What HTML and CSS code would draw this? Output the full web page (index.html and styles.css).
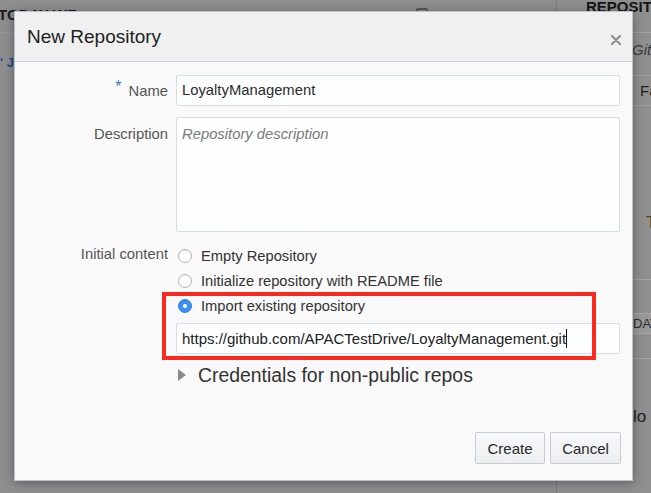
FILE: index.html
```html
<!DOCTYPE html>
<html>
<head>
<meta charset="utf-8">
<link rel="stylesheet" href="styles.css">
</head>
<body>
<div class="page">
  <div class="main">
    <div class="main-head"><span class="main-title">TODAY WE</span><span class="main-icon"></span></div>
    <div class="main-link">' Jo</div>
  </div>
  <div class="side">
    <div class="side-head">REPOSITORIES</div>
    <div class="side-search">Git</div>
    <div class="side-filter">Fa</div>
    <div class="side-item">T</div>
    <div class="side-tagrow"><div class="side-tag">DAV</div></div>
    <div class="side-text">lo c</div>
  </div>
</div>

<div class="dialog">
  <div class="dialog-head">
    <h1 class="dialog-title">New Repository</h1>
    <span class="close"><svg width="10" height="10" viewBox="0 0 10 10"><path d="M1 1L9 9M9 1L1 9" stroke="#8c8c8c" stroke-width="2" stroke-linecap="round"/></svg></span>
  </div>
  <div class="dialog-body">
    <div class="form">
      <div class="label label-mid"><span class="req">*</span>Name</div>
      <div class="field">LoyaltyManagement</div>
      <div class="label label-top">Description</div>
      <div class="field textarea"><span class="placeholder">Repository description</span></div>
      <div class="label label-radio">Initial content</div>
      <div class="options">
        <div class="radio-row"><span class="radio"></span>Empty Repository</div>
        <div class="radio-row"><span class="radio"></span>Initialize repository with README file</div>
        <div class="radio-row"><span class="radio checked"></span>Import existing repository</div>
        <div class="field url">https://github.com/APACTestDrive/LoyaltyManagement.git<span class="caret"></span></div>
        <div class="cred"><span class="tri"></span>Credentials for non-public repos</div>
      </div>
    </div>
  </div>
  <div class="dialog-foot">
    <button class="btn">Create</button>
    <button class="btn">Cancel</button>
  </div>
  <div class="highlight"></div>
</div>
</body>
</html>
```

FILE: styles.css
```css
* { box-sizing: border-box; }
html, body { margin: 0; padding: 0; }
body {
  width: 651px;
  height: 493px;
  overflow: hidden;
  background: #8f8f8f;
  font-family: "Liberation Sans", Arial, sans-serif;
  position: relative;
}

/* background page (dimmed) */
.page {
  display: grid;
  grid-template-columns: 556px 1fr;
  height: 493px;
}
.main { background: #8e8e8e; }
.main-head {
  display: flex;
  justify-content: space-between;
  height: 33px;
  padding: 7px 128px 0 0;
  border-bottom: 1px solid #969696;
}
.main-title {
  font-weight: bold;
  font-size: 15px;
  line-height: 16px;
  color: #1c1c1c;
  margin-left: -2px;
}
.main-icon {
  width: 12px;
  height: 12px;
  border: 2px solid #555;
  border-radius: 2px;
  margin-top: 1px;
}
.main-link {
  padding: 22px 0 0 0;
  font-size: 13px;
  font-weight: bold;
  line-height: 16px;
  color: #1f4a86;
}
.side {
  border-left: 1px solid #7c7c7c;
  background: #8f8f8f;
  color: #1e1e1e;
}
.side-head {
  height: 33px;
  padding: 1px 0 0 29px;
  font-weight: bold;
  font-size: 15px;
  line-height: 12px;
  color: #151515;
  border-bottom: 1px solid #a2a2a2;
  white-space: nowrap;
  overflow: hidden;
}
.side-search {
  height: 42px;
  padding: 8px 0 0 75px;
  font-style: italic;
  font-size: 15px;
  line-height: 17px;
  color: #3a3a3a;
}
.side-filter {
  height: 31px;
  padding-left: 83px;
  border-top: 1px solid #a0a0a0;
  border-bottom: 1px solid #a0a0a0;
  font-size: 15px;
  line-height: 29px;
  color: #1e1e1e;
}
.side-item {
  height: 174px;
  padding: 108px 0 0 89px;
  font-size: 17px;
  line-height: 18px;
  color: #4e4528;
  border-bottom: 1px solid #a3a3a3;
}
.side-tagrow {
  height: 79px;
  padding-top: 33px;
  border-bottom: 1px solid #a3a3a3;
}
.side-tag {
  height: 21px;
  padding-left: 76px;
  border-top: 1px solid #a6a6a6;
  border-bottom: 1px solid #a6a6a6;
  background: #999;
  font-size: 13px;
  line-height: 19px;
  color: #2a2a2a;
}
.side-text {
  padding: 49px 0 0 76px;
  font-size: 17px;
  line-height: 18px;
  color: #202020;
}

/* dialog */
.dialog {
  position: absolute;
  left: 14px;
  top: 11px;
  width: 619px;
  height: 470px;
  background: #f9f9f9;
  border: 1px solid #b9c4cf;
  box-shadow: 0 2px 10px rgba(0,0,0,0.35);
  display: flex;
  flex-direction: column;
}
.dialog-head {
  height: 50px;
  flex: none;
  background: #f0f0f0;
  border-bottom: 1px solid #c8d2dc;
  display: flex;
  align-items: center;
  justify-content: space-between;
  padding: 0 11px 0 12px;
}
.dialog-title {
  margin: 0;
  font-weight: normal;
  font-size: 19px;
  color: #222;
  line-height: 24px;
}
.close {
  display: flex;
  margin-top: 7px;
}
.dialog-body {
  flex: 1;
  padding: 13px 12px 0 0;
}
.form {
  display: grid;
  grid-template-columns: 153px 444px;
  column-gap: 8px;
  row-gap: 11px;
}
.label {
  text-align: right;
  font-size: 14.8px;
  color: #555;
}
.label-mid { align-self: center; }
.label-top { padding-top: 8px; line-height: 18px; }
.label-radio { line-height: 25px; margin-top: -1px; }
.req {
  color: #3a78c9;
  font-size: 16px;
  position: relative;
  top: -4px;
  margin-right: 7px;
}
.field {
  height: 31px;
  background: #fdfeff;
  border: 1px solid #d9dee3;
  border-radius: 2px;
  padding: 0 5px;
  font-size: 14.8px;
  line-height: 29px;
  color: #2b2b2b;
  white-space: nowrap;
}
.textarea {
  height: 115px;
  padding-top: 7px;
  line-height: 18px;
}
.placeholder {
  font-style: italic;
  color: #7a7a7a;
}
.options {
  display: flex;
  flex-direction: column;
}
.radio-row {
  height: 25px;
  display: flex;
  align-items: center;
  padding-left: 2px;
  font-size: 14.7px;
  color: #333;
}
.radio {
  width: 14px;
  height: 14px;
  border-radius: 50%;
  border: 1px solid #b2b2b2;
  background: #fff;
  margin-right: 9px;
  display: flex;
  align-items: center;
  justify-content: center;
  box-shadow: inset 0 1px 1px rgba(0,0,0,0.06);
}
.radio.checked {
  background: #3c8ef4;
  border-color: #3482e6;
}
.radio.checked::after {
  content: "";
  width: 4px;
  height: 4px;
  border-radius: 50%;
  background: #fff;
}
.url {
  margin-top: 5px;
  font-size: 15px;
  color: #222;
}
.caret {
  display: inline-block;
  width: 1px;
  height: 19px;
  background: #111;
  vertical-align: -4px;
}
.cred {
  margin-top: 9px;
  height: 24px;
  display: flex;
  align-items: center;
  font-size: 19.4px;
  color: #333;
}
.tri {
  width: 0;
  height: 0;
  border-left: 8px solid #8a8a8a;
  border-top: 6px solid transparent;
  border-bottom: 6px solid transparent;
  margin: 0 12px 0 2px;
}
.dialog-foot {
  flex: none;
  display: flex;
  justify-content: flex-end;
  gap: 5px;
  padding: 0 11px 16px 0;
}
.btn {
  height: 32px;
  padding: 0;
  width: 70px;
  background: linear-gradient(#f8f9fa, #eceef0);
  border: 1px solid #c6ccd2;
  border-radius: 2px;
  font-family: "Liberation Sans", Arial, sans-serif;
  font-size: 15px;
  color: #2a2a2a;
}
.btn + .btn { width: 71px; }
.highlight {
  position: absolute;
  left: 147px;
  top: 280px;
  width: 434px;
  height: 68px;
  border: 4px solid #fb2a20;
}
```
